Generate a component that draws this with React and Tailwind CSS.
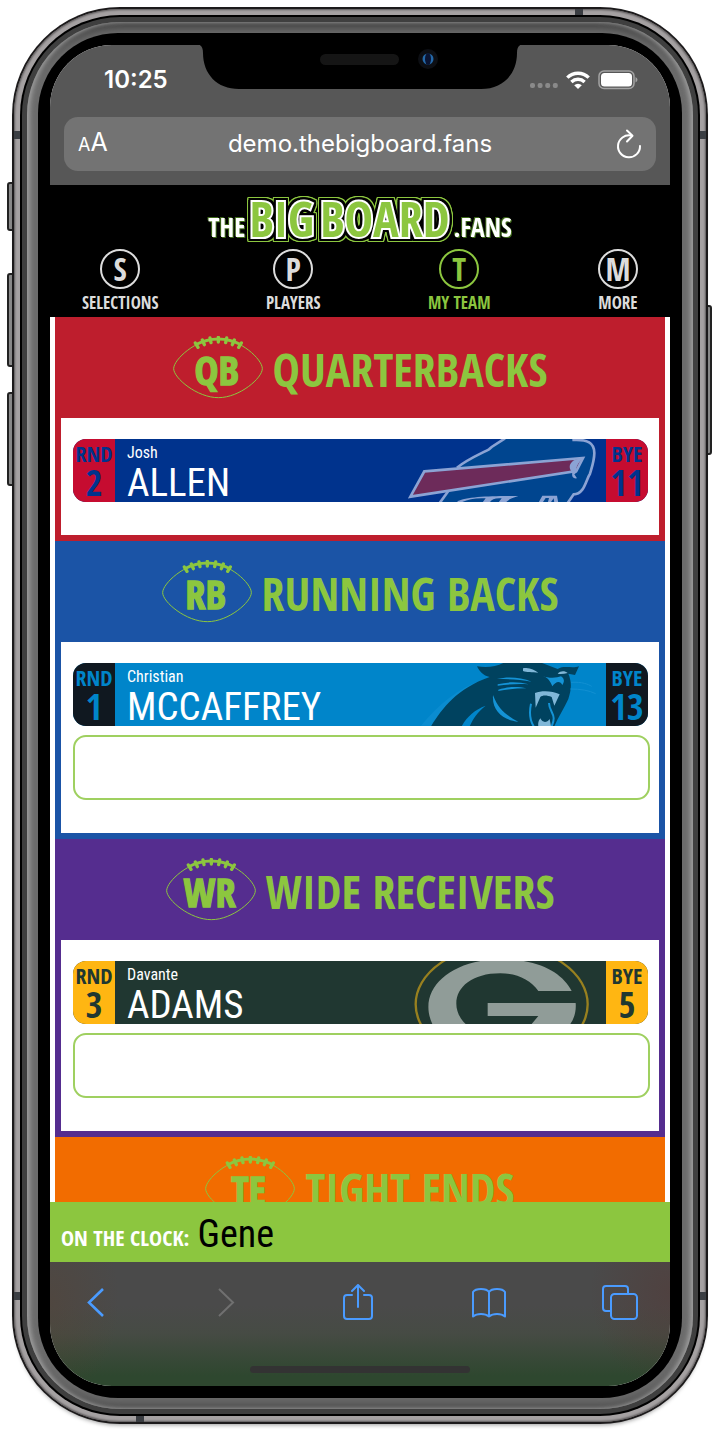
const jersey = 'font-["Open_Sans_Condensed","Roboto_Condensed",sans-serif] font-bold';
const narrow = 'font-["Roboto_Condensed","Noto_Sans",sans-serif]';

function Football({ label }) {
  return (
    <svg viewBox="0 0 270 192" className="h-16 w-[90px] shrink-0" role="img" aria-label={label}>
      <path
        d="M2 98C2 70 70 8 136 8S268 70 268 98C268 126 200 185 136 185S2 126 2 98Z"
        fill="none"
        stroke="#8cc63f"
        strokeWidth="3"
      />
      <path d="M66 27Q136 -9 206 27" fill="none" stroke="#8cc63f" strokeWidth="9" />
      <g stroke="#8cc63f" strokeWidth="10" strokeLinecap="round">
        <path d="M67 21L75 34M88 12L94 26M111 6L114 20M136 4V18M161 6L158 20M184 12L178 26M205 21L197 34" />
      </g>
      <text
        x="131"
        y="147"
        textAnchor="middle"
        fill="#8cc63f"
        stroke="#8cc63f"
        strokeWidth="4"
        fontSize="121"
        className={jersey}
      >
        {label}
      </text>
    </svg>
  );
}

function BillsLogo() {
  return (
    <svg viewBox="140 356 597 189" className="h-[63px] w-[199px]" aria-hidden="true">
      <path d="M236 550L262 514L196 512L290 442C318 418 352 404 386 386L434 354H636C680 352 702 366 702 396C702 420 694 442 688 462C672 488 664 524 640 522L620 550Z" fill="#00458f" />
      <g fill="none" stroke="#8ba3d4" strokeWidth="8">
        <path d="M290 442C316 420 350 405 386 387L394 380L434 354" />
        <path d="M636 359C682 356 702 368 702 398C702 420 695 440 689 460C676 480 672 522 640 522L622 548" />
        <path d="M264 512L238 548" />
      </g>
      <path d="M192 453L668 413L648 452L150 529Z" fill="#6d2b5a" stroke="#8ba3d4" strokeWidth="8" />
      <path d="M672 411C652 426 644 444 650 456L642 462L650 474C636 476 634 466 636 456C622 442 628 426 644 418Z" fill="#8ba3d4" />
      <path d="M290 543C320 528 400 526 474 527C450 534 442 540 436 547H414L424 534C404 532 392 538 388 547H366L376 534C344 532 318 538 300 548Z" fill="#8ba3d4" />
      <path d="M534 548L546 526H590L594 548H582L580 534L570 548H562L566 533H556L546 548Z" fill="#8ba3d4" />
    </svg>
  );
}

function PanthersLogo() {
  return (
    <svg viewBox="140 66 597 189" className="h-[63px] w-[199px]" aria-hidden="true">
      <path d="M182 254C230 196 290 142 372 114L350 134C290 160 250 206 216 254Z" fill="#0a8cd0" />
      <path d="M350 76C378 80 410 78 432 64H540L592 84C612 72 636 84 656 76L644 102L624 98C636 126 632 150 624 174C612 200 592 232 582 256H212C246 202 290 142 388 108C368 104 358 92 350 76Z" fill="#00425f" />
      <path d="M304 256C320 226 344 206 376 194C350 214 338 234 328 256Z" fill="#0085ca" />
      <path d="M398 162C394 210 430 238 474 242C436 222 414 204 398 162Z" fill="#1493d6" />
      <path d="M410 114C440 106 480 108 514 122C480 116 446 114 410 114ZM412 130C442 122 474 122 506 130C474 128 442 130 412 134ZM414 146C444 136 474 136 498 142C470 142 442 144 414 150Z" fill="#1493d6" />
      <path d="M548 104C560 112 588 112 602 106C614 114 612 124 606 132C600 118 586 120 576 136C570 120 562 110 548 104Z" fill="#1493d6" />
      <path d="M488 82C506 78 522 86 534 95C516 94 498 94 488 90ZM592 98C602 88 614 90 622 96C612 98 602 100 592 98Z" fill="#80b7d8" />
      <path d="M524 156C546 148 576 150 598 160L582 194L574 168C560 162 546 162 540 168L526 200Z" fill="#80b7d8" />
      <path d="M512 188C506 216 510 240 520 256M566 186C566 206 580 216 580 232C580 244 576 250 574 256" fill="none" stroke="#1493d6" strokeWidth="6" />
      <path d="M534 256C532 244 536 238 540 232C546 246 560 246 568 234L572 256Z" fill="#80b7d8" />
      <path d="M632 124C666 122 684 130 694 136M630 144C660 144 686 148 706 158" fill="none" stroke="#1290d2" strokeWidth="3" />
    </svg>
  );
}

function PackersLogo() {
  return (
    <svg viewBox="140 90 597 189" className="h-[63px] w-[199px]" aria-hidden="true">
      <ellipse cx="424" cy="220" rx="258" ry="176" fill="none" stroke="#98801f" strokeWidth="7" />
      <path d="M216 279C170 180 262 86 424 84C540 86 606 126 634 180H534C510 146 470 127 420 127C336 127 288 168 288 218C288 240 298 262 316 279Z" fill="#909c98" />
      <path d="M382 216H646C648 240 642 262 630 279H514L534 255H382Z" fill="#909c98" />
    </svg>
  );
}

function Strip({ label, value, className }) {
  return (
    <div className={"flex w-[42px] shrink-0 flex-col items-center gap-1 pt-0.5 " + className}>
      <span className="text-[22px] leading-6">{label}</span>
      <span className="text-4xl leading-7">{value}</span>
    </div>
  );
}

function PlayerCard({ player }) {
  const { Logo } = player;
  return (
    <article className={"mr-0.5 flex h-[63px] overflow-hidden rounded-[13px] " + player.body}>
      <Strip label="RND" value={player.round} className={player.strip + " " + jersey} />
      <div className={"flex min-w-0 flex-1 flex-col pt-1 pl-3 text-white " + narrow}>
        <span className="text-base leading-5">{player.first}</span>
        <span className="text-[39px] leading-10">{player.last}</span>
      </div>
      <Logo />
      <Strip label="BYE" value={player.bye} className={player.strip + " " + jersey} />
    </article>
  );
}

function PositionHeading({ abbr, title, className }) {
  return (
    <h2 className={"flex h-[101px] items-center justify-center gap-2.5 text-[#8cc63f] " + className}>
      <Football label={abbr} />
      <span className={"pt-0.5 text-[46px] leading-none " + jersey}>{title}</span>
    </h2>
  );
}

const sections = [
  {
    abbr: "QB",
    title: "QUARTERBACKS",
    color: "bg-[#be1e2d]",
    border: "border-[#be1e2d]",
    player: { first: "Josh", last: "ALLEN", round: "2", bye: "11", body: "bg-[#00338d]", strip: "bg-[#c60c30] text-[#00338d]", Logo: BillsLogo },
    open: false,
  },
  {
    abbr: "RB",
    title: "RUNNING BACKS",
    color: "bg-[#1b54a6]",
    border: "border-[#1b54a6]",
    player: { first: "Christian", last: "MCCAFFREY", round: "1", bye: "13", body: "bg-[#0085ca]", strip: "bg-[#101820] text-[#0085ca]", Logo: PanthersLogo },
    open: true,
  },
  {
    abbr: "WR",
    title: "WIDE RECEIVERS",
    color: "bg-[#552d8f]",
    border: "border-[#552d8f]",
    player: { first: "Davante", last: "ADAMS", round: "3", bye: "5", body: "bg-[#203731]", strip: "bg-[#ffb612] text-[#203731]", Logo: PackersLogo },
    open: true,
  },
];

const nav = [
  { letter: "S", label: "SELECTIONS" },
  { letter: "P", label: "PLAYERS" },
  { letter: "T", label: "MY TEAM", active: true },
  { letter: "M", label: "MORE" },
];

function StatusBar() {
  return (
    <div className="flex h-[70px] items-center justify-between pr-8 pl-[54px] text-white">
      <span className="text-2xl font-semibold">10:25</span>
      <div className="flex items-center gap-2">
        <svg viewBox="0 0 28 6" className="mt-3 h-1.5 w-7" fill="#8a8a8a" aria-hidden="true">
          <rect width="5" height="5" rx="2" />
          <rect x="7.6" width="5" height="5" rx="2" />
          <rect x="15.2" width="5" height="5" rx="2" />
          <rect x="22.8" width="5" height="5" rx="2" />
        </svg>
        <svg viewBox="0 0 24 18" className="h-[18px] w-6" fill="none" stroke="#fff" strokeWidth="3.4" aria-hidden="true">
          <path d="M1.3 6.6A15.4 15.4 0 0 1 22.7 6.6" />
          <path d="M5.4 10.9A9.6 9.6 0 0 1 18.6 10.9" />
          <path d="M12 18L8.2 14.2A5.4 5.4 0 0 1 15.8 14.2Z" fill="#fff" stroke="none" />
        </svg>
        <svg viewBox="0 0 40 20" className="h-5 w-10" aria-hidden="true">
          <rect x="1" y="1" width="35" height="17.5" rx="5" fill="none" stroke="#a3a3a3" strokeWidth="1.5" />
          <rect x="3" y="3" width="31" height="13.5" rx="3.5" fill="#fff" />
          <path d="M37.5 7Q39.5 8 39.5 9.8T37.5 12.6Z" fill="#a3a3a3" />
        </svg>
      </div>
    </div>
  );
}

function Notch() {
  return (
    <svg viewBox="0 0 330 46" className="absolute -top-px left-1/2 h-[46px] w-[330px] -translate-x-1/2" aria-hidden="true">
      <path d="M0 0C6 0 8 3 8 9C8 30 22 45 44 45H286C308 45 322 30 322 9C322 3 324 0 330 0Z" fill="#000" />
      <rect x="125" y="10" width="79" height="11" rx="5.5" fill="#151515" />
      <circle cx="233" cy="15" r="10" fill="#0d0f14" />
      <circle cx="233" cy="15" r="5.500" fill="#2468a8" />
      <ellipse cx="233" cy="15" rx="3" ry="6" fill="#0a1433" />
    </svg>
  );
}

function AddressBar() {
  return (
    <div className="mx-3.5 mt-0.5 grid h-[54px] grid-cols-[1fr_auto_1fr] items-center rounded-[14px] bg-[#737373] px-3.5 text-white">
      <button aria-label="Text size" className="justify-self-start leading-none">
        <span className="text-lg">A</span>
        <span className="text-[25px]">A</span>
      </button>
      <span className="text-2xl">demo.thebigboard.fans</span>
      <button aria-label="Reload" className="justify-self-end">
        <svg viewBox="0 0 28 30" className="h-[30px] w-7" fill="none" stroke="#fff" strokeWidth="2" strokeLinecap="round" strokeLinejoin="round">
          <path d="M17 6.500A11 11 0 1 0 26 17" />
          <path d="M13 1.500L18.500 6.700L13 12.500" />
        </svg>
      </button>
    </div>
  );
}

function SiteHeader() {
  return (
    <header className="flex h-[132px] flex-col items-center bg-black pt-[11px]">
      <h1 className={"flex h-[46px] items-baseline justify-center " + jersey}>
        <span className="text-[26px] leading-none text-white [filter:drop-shadow(1px_1px_#3f6b1a)_drop-shadow(-1px_-1px_#3f6b1a)]">THE</span>
        <span className="flex gap-1.5 px-1 text-[48px] leading-[46px] text-[#8cc63f] [-webkit-text-stroke:4px_#fff] [paint-order:stroke_fill] [filter:drop-shadow(2px_0_#000)_drop-shadow(-2px_0_#000)_drop-shadow(0_2px_#000)_drop-shadow(0_-2px_#000)_drop-shadow(1px_0_#8cc63f)_drop-shadow(-1px_0_#8cc63f)_drop-shadow(0_1px_#8cc63f)_drop-shadow(0_-1px_#8cc63f)]">
          <span>BIG</span>
          <span>BOARD</span>
        </span>
        <span className="text-[26px] leading-none text-white [filter:drop-shadow(1px_1px_#3f6b1a)_drop-shadow(-1px_-1px_#3f6b1a)]">.FANS</span>
      </h1>
      <nav className={"mt-[7px] flex w-full justify-between px-8 " + jersey}>
        {nav.map((item) => (
          <a
            key={item.label}
            href="#"
            className={"flex flex-col items-center gap-1.5 " + (item.active ? "text-[#8cc63f]" : "text-[#dcdcdc]")}
          >
            <span className="flex size-10 items-center justify-center rounded-full border-2 border-current text-[32px] leading-none">
              {item.letter}
            </span>
            <span className="text-[17px] leading-4">{item.label}</span>
          </a>
        ))}
      </nav>
    </header>
  );
}

function Toolbar() {
  const stroke = { fill: "none", stroke: "#4a9bff", strokeWidth: 2, strokeLinecap: "round", strokeLinejoin: "round" };
  return (
    <footer className="h-[124px] bg-[radial-gradient(70px_100px_at_0_40px,#5a402c55,transparent),radial-gradient(80px_100px_at_100%_30px,#5a302c55,transparent),linear-gradient(#4a4a4a,#4a4a4a_35%,#464b44_58%,#2e472f_92%)] pt-[22px]">
      <div className="flex justify-between pr-8 pl-7">
        <button aria-label="Back">
          <svg viewBox="0 0 36 36" className="size-9" {...stroke} strokeWidth="2.6" strokeLinecap="butt" strokeLinejoin="miter">
            <path d="M25 5L11 18.500L25 32" />
          </svg>
        </button>
        <button aria-label="Forward" disabled>
          <svg viewBox="0 0 36 36" className="size-9" {...stroke} stroke="#707070" strokeLinecap="butt" strokeLinejoin="miter">
            <path d="M10 5L24 18.500L10 32" />
          </svg>
        </button>
        <button aria-label="Share">
          <svg viewBox="0 0 36 36" className="size-9" {...stroke}>
            <path d="M12 11H7Q4 11 4 14V32Q4 35 7 35H29Q32 35 32 32V14Q32 11 29 11H24" />
            <path d="M18 23V1.500M12 7L18 1L24 7" />
          </svg>
        </button>
        <button aria-label="Bookmarks">
          <svg viewBox="0 0 36 36" className="size-9" {...stroke}>
            <path d="M18 8Q16 5 10 5Q4 5 2 8V32.500Q5 30 10 30Q15 30 18 32.500Q21 30 26 30Q31 30 34 32.500V8Q32 5 26 5Q20 5 18 8V32.500" />
          </svg>
        </button>
        <button aria-label="Tabs">
          <svg viewBox="0 0 36 36" className="size-9" {...stroke}>
            <path d="M9 27H4Q1 27 1 24V5Q1 2 4 2H23Q26 2 26 5V9" />
            <rect x="9" y="10" width="26" height="25" rx="3.500" />
          </svg>
        </button>
      </div>
      <div className="mx-auto mt-[46px] h-[7px] w-[220px] rounded-full bg-[#333]" />
    </footer>
  );
}

function Screen() {
  return (
    <div className="relative flex flex-col overflow-hidden rounded-[62px] bg-white font-[Inter,sans-serif]">
      <div className="bg-[#575757] pb-3.5">
        <StatusBar />
        <AddressBar />
      </div>
      <Notch />
      <SiteHeader />
      <main className="mx-[5px] h-[885px] overflow-hidden">
        {sections.map((s) => (
          <section key={s.abbr}>
            <PositionHeading abbr={s.abbr} title={s.title} className={s.color} />
            <div className={"flex flex-col gap-[9px] border-x-6 border-b-6 bg-white pt-[21px] pr-[9px] pb-[33px] pl-3 " + s.border}>
              <PlayerCard player={s.player} />
              {s.open && <div className="h-[65px] rounded-[13px] border-2 border-[#9fd060]" />}
            </div>
          </section>
        ))}
        <PositionHeading abbr="TE" title="TIGHT ENDS" className="bg-[#f26c00]" />
      </main>
      <div className="flex h-[60px] items-center gap-2 bg-[#8cc63f] pl-[11px]">
        <span className={"pt-2.5 text-[22px] leading-none text-white " + jersey}>ON THE CLOCK:</span>
        <span className={"pt-1 text-[38px] leading-none text-black " + narrow}>Gene</span>
      </div>
      <Toolbar />
    </div>
  );
}

export default function App() {
  return (
    <div className="bg-white px-3 pt-[7px] pb-[7px]">
      <div className="relative">
        <div className="absolute top-[175px] -left-[5px] h-[49px] w-2 rounded-l-[3px] border-2 border-[#222] bg-[#8a8a8a]" />
        <div className="absolute top-[266px] -left-[5px] h-[94px] w-2 rounded-l-[3px] border-2 border-[#222] bg-[#8a8a8a]" />
        <div className="absolute top-[385px] -left-[5px] h-[94px] w-2 rounded-l-[3px] border-2 border-[#222] bg-[#8a8a8a]" />
        <div className="absolute top-[298px] -right-[4px] h-[150px] w-2 rounded-r-[3px] border-2 border-[#222] bg-[#8a8a8a]" />
        <div className="relative rounded-[108px] bg-[#1c1a1b] p-0.5 shadow-[0_4px_4px_-3px_#00000066]">
          <div className="relative rounded-[106px] bg-[#a5a1a2] p-1.5 shadow-[inset_0_0_2px_1px_#5a5758]">
            <div className="absolute top-[122px] left-0 h-2 w-full bg-[#3a3d42]" />
            <div className="absolute bottom-[122px] left-0 h-2 w-full bg-[#3a3d42]" />
            <div className="absolute top-0 right-[123px] h-1.5 w-2 bg-[#3a3d42]" />
            <div className="absolute bottom-0 left-[122px] h-1.5 w-2 bg-[#3a3d42]" />
            <div className="relative rounded-[100px] bg-black p-0.5">
              <div className="rounded-[98px] bg-[#3f3f3f] p-[5px]">
                <div className="rounded-[93px] bg-[#6c6c6c] p-[11px] shadow-[inset_4px_0_5px_-1px_#a0a0a0,inset_-4px_0_5px_-1px_#a0a0a0,inset_0_10px_8px_-4px_#404040,inset_0_-10px_8px_-4px_#505050]">
                  <div className="rounded-[80px] bg-black p-3">
                    <Screen />
                  </div>
                </div>
              </div>
            </div>
          </div>
        </div>
      </div>
    </div>
  );
}
